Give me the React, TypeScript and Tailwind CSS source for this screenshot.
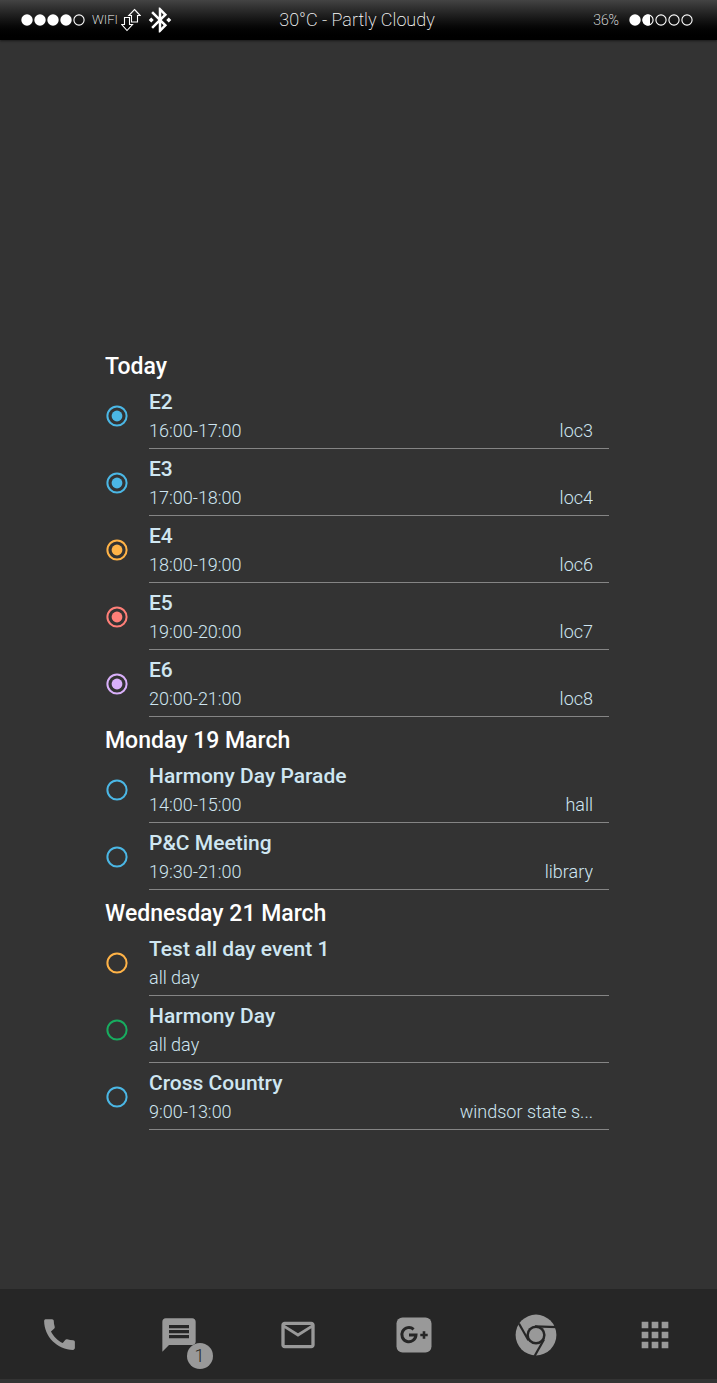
import type { ReactNode } from "react";
import { MdApps, MdBluetoothConnected, MdCall, MdMailOutline, MdMessage } from "react-icons/md";

type CalendarEvent = {
  title: string;
  time: string;
  place?: string;
  color: string;
  active?: boolean;
};

type Day = { label: string; events: CalendarEvent[] };

const BLUE = "#4bb7e5";
const ORANGE = "#ffb347";
const RED = "#ff7f78";
const PURPLE = "#d9b0fa";
const GREEN = "#18ac5f";

const days: Day[] = [
  {
    label: "Today",
    events: [
      { title: "E2", time: "16:00-17:00", place: "loc3", color: BLUE, active: true },
      { title: "E3", time: "17:00-18:00", place: "loc4", color: BLUE, active: true },
      { title: "E4", time: "18:00-19:00", place: "loc6", color: ORANGE, active: true },
      { title: "E5", time: "19:00-20:00", place: "loc7", color: RED, active: true },
      { title: "E6", time: "20:00-21:00", place: "loc8", color: PURPLE, active: true },
    ],
  },
  {
    label: "Monday 19 March",
    events: [
      { title: "Harmony Day Parade", time: "14:00-15:00", place: "hall", color: BLUE },
      { title: "P&C Meeting", time: "19:30-21:00", place: "library", color: BLUE },
    ],
  },
  {
    label: "Wednesday 21 March",
    events: [
      { title: "Test all day event 1", time: "all day", color: ORANGE },
      { title: "Harmony Day", time: "all day", color: GREEN },
      { title: "Cross Country", time: "9:00-13:00", place: "windsor state s...", color: BLUE },
    ],
  },
];

/* Five dots; `level` is how many are filled, fractions allowed. */
function Dots({ level, label }: { level: number; label: string }) {
  return (
    <svg width="64" height="12" viewBox="0 0 64 12" role="img" aria-label={label}>
      {[0, 1, 2, 3, 4].map((i) => {
        const fill = Math.max(0, Math.min(1, level - i));
        const cx = 6 + i * 13;
        return (
          <g key={i}>
            {fill === 1 && <circle cx={cx} cy="6" r="5.7" fill="#fff" />}
            {fill > 0 && fill < 1 && (
              <path d={`M${cx + 2} .9V11.1A5.5 5.5 0 1 1 ${cx + 2} .9Z`} fill="#fff" />
            )}
            {fill < 1 && <circle cx={cx} cy="6" r="5.1" fill="none" stroke="#fff" strokeWidth="1.1" />}
          </g>
        );
      })}
    </svg>
  );
}

function DataArrows() {
  return (
    <svg width="20" height="24" viewBox="0 0 20 24" fill="none" stroke="#fff" strokeWidth="1.1" aria-hidden="true">
      <path d="M13.5 1.5L19.2 7.5H16.5V14H10.5V7.5H7.8Z" />
      <path d="M3.5 9.5H8.5V16.5H11.5L6 22.5L.8 16.5H3.5Z" />
    </svg>
  );
}

function Marker({ color, active }: { color: string; active?: boolean }) {
  return (
    <svg width="22" height="22" viewBox="0 0 22 22" className="shrink-0" aria-hidden="true">
      <circle cx="11" cy="11" r="9.6" fill="none" stroke={color} strokeWidth="2" />
      {active && <circle cx="11" cy="11" r="5.4" fill={color} />}
    </svg>
  );
}

function GooglePlusIcon() {
  return (
    <svg width="42" height="36" viewBox="0 0 42 36" aria-hidden="true">
      <rect x="0.5" y="0.5" width="35" height="35" rx="6" fill="currentColor" />
      <path
        d="M17.6 12.3A7.1 7.1 0 1 0 20 18H13"
        fill="none"
        stroke="#262626"
        strokeWidth="3"
        strokeLinejoin="miter"
      />
      <path d="M24.3 18H31.7M28 14.2V21.8" stroke="#262626" strokeWidth="2.6" />
    </svg>
  );
}

function ChromeIcon() {
  return (
    <svg width="42" height="42" viewBox="0 0 42 42" aria-hidden="true">
      <circle cx="21" cy="21" r="20.4" fill="currentColor" />
      <circle cx="21" cy="21" r="9.6" fill="#262626" />
      <g fill="none" stroke="#262626" strokeWidth="2.2">
        <path d="M20 12.3L42 13.2" />
        <path d="M13.4 26.3L3.9 9.5" />
        <path d="M29 25.5L19.6 42" />
      </g>
      <circle cx="21" cy="21" r="7.1" fill="currentColor" />
    </svg>
  );
}

function DockItem({ label, children }: { label: string; children: ReactNode }) {
  return (
    <button type="button" aria-label={label} className="flex items-center justify-center text-[#999999]">
      {children}
    </button>
  );
}

export default function App() {
  return (
    <div className="flex min-h-screen flex-col bg-[#333333] font-['Roboto','Liberation_Sans',sans-serif] text-white">
      <header className="grid h-10 grid-cols-[1fr_auto_1fr] items-center bg-linear-to-b from-[#444444] to-black pr-6 pl-[21px] shadow-[0_1px_2px_#1a1a1a]">
        <div className="flex items-center">
          <Dots level={4} label="Signal 4 of 5" />
          <span className="ml-[7px] w-[29px] text-[13px] font-extralight">WIFI</span>
          <DataArrows />
          <MdBluetoothConnected className="ml-1 size-[30px]" aria-label="Bluetooth connected" />
        </div>
        <p className="text-[18px] leading-9 font-extralight">30°C - Partly Cloudy</p>
        <div className="flex items-center justify-end gap-[10px]">
          <span className="text-[14px] font-extralight">36%</span>
          <Dots level={1.5} label="Battery 36%" />
        </div>
      </header>

      <main className="flex-1 pt-[303px] pr-[108px] pb-10 pl-[105px]">
        {days.map((day) => (
          <section key={day.label}>
            <h2 className="h-[39px] text-[23px] leading-[48px] font-medium">{day.label}</h2>
            <ul>
              {day.events.map((event) => (
                <li key={event.title} className="flex h-[67px] items-center gap-[21px] pl-px">
                  <Marker color={event.color} active={event.active} />
                  <div className="flex h-full min-w-0 flex-1 flex-col border-b border-[#858585] pt-[5px] pr-4 text-[#cfe6f1]">
                    <h3 className="text-[21px] leading-[30px] font-medium">{event.title}</h3>
                    <div className="flex justify-between gap-4 text-[18px] leading-[28px] font-light">
                      <span>{event.time}</span>
                      {event.place && <span className="truncate">{event.place}</span>}
                    </div>
                  </div>
                </li>
              ))}
            </ul>
          </section>
        ))}
      </main>

      <nav aria-label="Dock" className="mb-1 grid h-[90px] grid-cols-6 bg-[#262626] pt-px pr-[3px]">
        <DockItem label="Phone">
          <MdCall className="size-[41px]" />
        </DockItem>
        <DockItem label="Messages, 1 unread">
          <span className="relative">
            <MdMessage className="size-10" />
            <span className="absolute top-[28px] left-[28px] flex size-[26px] items-center justify-center rounded-full bg-[#999999] text-[18px] font-light text-[#262626]">
              1
            </span>
          </span>
        </DockItem>
        <DockItem label="Mail">
          <MdMailOutline className="size-10" />
        </DockItem>
        <DockItem label="Google Plus">
          <GooglePlusIcon />
        </DockItem>
        <DockItem label="Chrome">
          <ChromeIcon />
        </DockItem>
        <DockItem label="All apps">
          <MdApps className="size-10" />
        </DockItem>
      </nav>
    </div>
  );
}
